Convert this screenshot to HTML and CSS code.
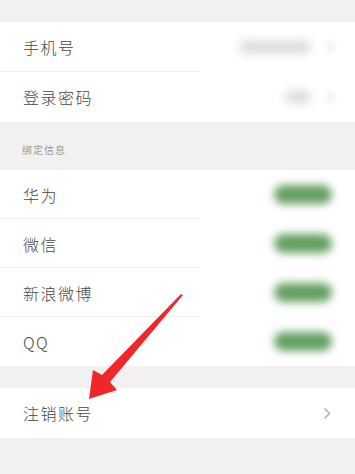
FILE: index.html
```html
<!DOCTYPE html>
<html lang="zh-CN">
<head>
    <meta charset="UTF-8">
    <meta name="viewport" content="width=device-width, initial-scale=1.0">
    <title>账号与安全</title>
    <link rel="stylesheet" href="styles.css">
</head>
<body>
    <div class="page">
        <div class="gap top"></div>
        <div class="group">
            <div class="row">
                <span class="label">手机号</span>
                <span class="value blur-text wide"></span>
                <span class="faint-arrow"></span>
            </div>
            <div class="row last">
                <span class="label">登录密码</span>
                <span class="value blur-text short"></span>
                <span class="faint-arrow"></span>
            </div>
        </div>
        <div class="section-title">绑定信息</div>
        <div class="group bind">
            <div class="row"><span class="label">华为</span><span class="pill"></span></div>
            <div class="row"><span class="label">微信</span><span class="pill"></span></div>
            <div class="row"><span class="label">新浪微博</span><span class="pill"></span></div>
            <div class="row last"><span class="label">QQ</span><span class="pill"></span></div>
        </div>
        <div class="gap mid"></div>
        <div class="group">
            <div class="row last">
                <span class="label">注销账号</span>
                <svg class="chevron" width="8" height="13" viewBox="0 0 8 13">
                    <path d="M1.5 1.5 L6.5 6.5 L1.5 11.5" fill="none" stroke="#a9a9a9" stroke-width="1.3"/>
                </svg>
            </div>
        </div>

        <!-- red pointer drawn over the list -->
        <svg class="pointer" width="355" height="474" viewBox="0 0 355 474">
            <polygon points="183,295 110,382 117,390 89,399 93,370 102,375 181,294" fill="#f0272a"/>
        </svg>
    </div>
</body>
</html>
```

FILE: styles.css
```css
body {
    margin: 0;
    background-color: #f2f1ef;
    font-family: "Noto Sans CJK SC", "Noto Sans", sans-serif;
    color: #474747;
}
.page {
    position: relative;
    width: 355px;
    height: 474px;
    overflow: hidden;
}
.gap.top {
    height: 22px;
}
.gap.mid {
    height: 22px;
}
.group {
    background-color: #fff;
}
.row {
    position: relative;
    display: flex;
    align-items: center;
    height: 50px;
    padding: 0 22px 0 23px;
}
.bind .row {
    height: 49px;
}
.row::after {
    content: "";
    position: absolute;
    left: 0;
    bottom: 0;
    width: 200px;
    height: 1px;
    background-color: #f1f0ee;
}
.row.last::after {
    display: none;
}
.label {
    flex: 1;
    font-size: 16px;
    font-weight: 300;
    letter-spacing: 1.5px;
}
.section-title {
    height: 48px;
    line-height: 56px;
    padding-left: 22px;
    font-size: 10px;
    color: #9a9a9a;
    letter-spacing: 1px;
}
.blur-text {
    display: inline-block;
    height: 12px;
    background-color: #dadada;
    border-radius: 6px;
    filter: blur(5px);
}
.blur-text.wide {
    width: 72px;
    margin-right: 16px;
}
.blur-text.short {
    width: 26px;
    margin-right: 16px;
}
.faint-arrow {
    display: inline-block;
    width: 6px;
    height: 10px;
    background-color: #ededed;
    filter: blur(3px);
}
.pill {
    display: inline-block;
    width: 58px;
    height: 19px;
    margin-right: 1px;
    background-color: #65a062;
    border-radius: 10px;
    filter: blur(4px);
}
.chevron {
    margin-right: 2px;
}
.pointer {
    position: absolute;
    left: 0;
    top: 0;
    pointer-events: none;
}
```
